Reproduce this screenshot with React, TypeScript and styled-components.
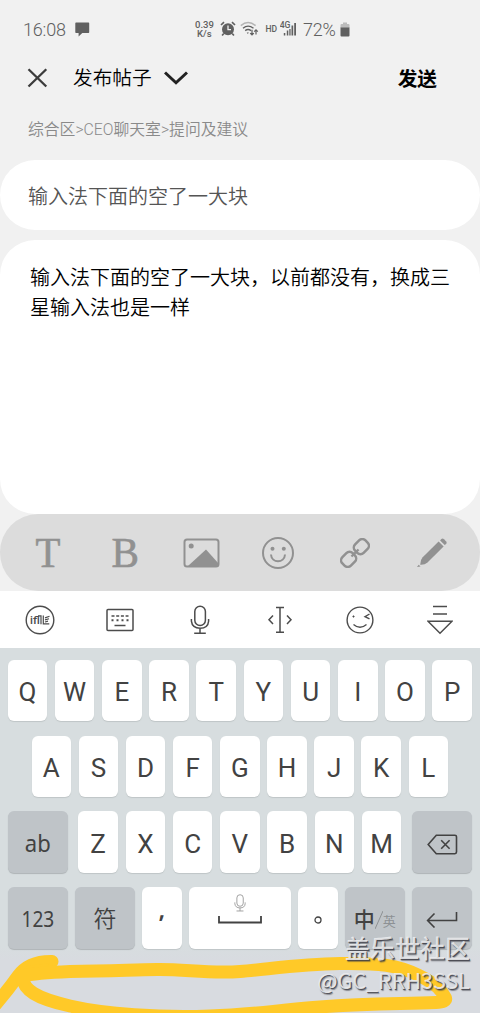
import React from 'react';
import styled, { createGlobalStyle } from 'styled-components';

const GlobalStyle = createGlobalStyle`
  * { box-sizing: border-box; }
  body { margin: 0; background: #f1f1f1; font-family: Roboto, "Noto Sans CJK SC", sans-serif; }
  svg { display: block; flex: none; }
`;

const Screen = styled.main`
  position: relative;
  width: 480px;
  height: 1013px;
  overflow: hidden;
  display: flex;
  flex-direction: column;
  background: #f1f1f1;
`;

const StatusBar = styled.header`
  height: 50px;
  padding: 8px 130px 0 23px;
  display: flex;
  align-items: center;
  color: #606060;
  font-size: 18px;
  font-weight: 350;
`;
const Clock = styled.span`width: 51.5px; letter-spacing: -0.2px;`;
const StatusRight = styled.div`
  margin-left: auto;
  display: flex;
  align-items: center;
`;
const Speed = styled.div`
  width: 20px;
  margin-right: 6px;
  font-size: 9.5px;
  line-height: 9px;
  font-weight: 500;
  text-align: center;
`;
const Hd = styled.span`font-size: 8.5px; font-weight: 500; margin: 0 3px 0 6px;`;
const Percent = styled.span`margin: 0 4px 0 6px; width: 33px; letter-spacing: -0.2px;`;

const TitleBar = styled.div`
  height: 55px;
  padding: 0 43px 0 27px;
  display: flex;
  align-items: center;
  font-size: 20px;
  line-height: 28px;
  color: #000;
`;
const PageTitle = styled.h1`
  margin: 3px 12px 0 25px;
  font-size: 19.7px;
  font-weight: 350;
`;
const SendButton = styled.button`
  margin: 0 0 0 auto;
  padding: 0;
  border: 0;
  background: none;
  font: 700 19.7px/28px "Noto Sans CJK SC", sans-serif;
  color: #000;
`;
const Breadcrumb = styled.nav`
  height: 55px;
  padding: 14px 28px 0;
  font-size: 15.8px;
  font-weight: 350;
  line-height: 22px;
  color: #8a8a8a;
`;

const Card = styled.section<{ $height: number; $gap: number }>`
  height: ${p => p.$height}px;
  margin-bottom: ${p => p.$gap}px;
  flex: none;
  border-radius: 35px;
  background: #fff;
`;
const Subject = styled.p`
  margin: 0;
  padding: 22px 28px;
  font-size: 20px;
  font-weight: 350;
  line-height: 30px;
  color: #555;
`;
const Content = styled.p`
  margin: 0;
  padding: 23px 29px 0 30px;
  font-size: 20px;
  font-weight: 350;
  line-height: 30px;
  color: #000;
`;

const FormatBar = styled.div`
  height: 77px;
  flex: none;
  padding: 0 9.5px;
  display: grid;
  grid-template-columns: repeat(6, 1fr);
  align-items: center;
  justify-items: center;
  border-radius: 38px;
  background: #dcdcdc;
  color: #919191;
`;
const SerifMark = styled.span<{ $squeeze: number }>`
  font: 400 42.5px/50px "Liberation Serif", serif;
  -webkit-text-stroke: 0.6px currentColor;
  transform: scaleX(${p => p.$squeeze});
`;

const ImeBar = styled.div`
  height: 57px;
  flex: none;
  display: grid;
  grid-template-columns: repeat(6, 1fr);
  align-items: center;
  justify-items: center;
  background: #fff;
  color: #4c4c4c;
`;

const Keyboard = styled.div`
  flex: 1;
  padding: 11.7px 8px 0 7.7px;
  display: flex;
  flex-direction: column;
  gap: 14.7px;
  background: linear-gradient(#d7dddf 0, #d7dddf 298px, #d8dbe0 312px);
`;
const KeyRow = styled.div<{ $inset?: number }>`
  height: 61.2px;
  padding: 0 ${p => p.$inset ?? 0}px;
  display: flex;
  justify-content: space-between;
`;
const LetterGroup = styled.div`
  width: 323px;
  display: flex;
  justify-content: space-between;
`;
const Key = styled.div<{ $w?: number; $dark?: boolean; $size?: number }>`
  width: ${p => p.$w ?? 39.5}px;
  height: 61.2px;
  display: flex;
  align-items: center;
  justify-content: center;
  padding-top: 4px;
  border-radius: 6px;
  background: ${p => (p.$dark ? '#bfc4c8' : '#fff')};
  box-shadow: 0 1px 1px ${p => (p.$dark ? '#aeb3b6' : '#bfc5c7')};
  color: #424242;
  font-size: ${p => p.$size ?? 26}px;
  line-height: 32px;
`;
const WordLabel = styled.span<{ $squeeze: number }>`
  margin-top: -3px;
  font-family: "Noto Sans", sans-serif;
  transform: scaleX(${p => p.$squeeze});
`;
const SymbolLabel = styled.span`font-weight: 350;`;
const CommaLabel = styled.span`
  margin-top: -21px;
  font-family: "Noto Sans", sans-serif;
  font-weight: 600;
`;
const SpaceKey = styled(Key)`
  flex-direction: column;
  justify-content: flex-start;
  padding-top: 7px;
`;
const LangLabel = styled.span`
  display: flex;
  align-items: center;
  font-size: 21px;
  font-weight: 500;
`;
const LangAlt = styled.small`
  padding-top: 5px;
  font-size: 13px;
  line-height: 16px;
  font-weight: 400;
  color: #8d9194;
`;

const Scribble = styled.svg`
  position: absolute;
  left: 0;
  bottom: 0;
`;
const Watermark = styled.div`
  position: absolute;
  right: 10px;
  bottom: 17px;
  text-align: right;
  color: rgba(235, 236, 238, 0.9);
  font-family: "Noto Sans CJK SC", sans-serif;
  text-shadow: 1px 1px 0 rgba(60, 60, 68, 0.8), 1.5px 1.5px 1px rgba(60, 60, 68, 0.5);
`;
const Community = styled.div`font-size: 25px; font-weight: 500; line-height: 34px;`;
const Author = styled.div`font-size: 21.5px; line-height: 32px;`;

const line = { fill: 'none', stroke: 'currentColor' } as const;

const ChatIcon = () => (
  <svg width="15" height="15" viewBox="0 0 15 15" fill="currentColor"><path d="M1 0.5h12.5q.7 0 .7.7v9q0 .7-.7.7H7.3L3.6 14.5v-3.6H1q-.7 0-.7-.7v-9Q.3.5 1 .5z" /></svg>
);
const AlarmIcon = () => (
  <svg width="16" height="16" viewBox="0 0 16 16">
    <circle cx="8" cy="8.2" r="6" fill="currentColor" />
    <path d="M1 4 4 1.2M15 4l-3-2.8M3.8 12.5l-1.7 2M12.2 12.5l1.7 2" {...line} strokeWidth="1.7" />
    <path d="M8 4.6v4h3" fill="none" stroke="#f1f1f1" strokeWidth="1.3" />
  </svg>
);
const WifiSvg = styled.svg`margin-left: 4px;`;
const WifiIcon = () => (
  <WifiSvg width="19" height="16" viewBox="0 0 19 16" {...line} strokeWidth="1.4">
    <path d="M.8 4.6Q8 -1.6 15.6 4.6" stroke="#b4b4b4" />
    <path d="M3 7.2Q8 3 13.5 7.2M5.2 9.6Q8 7.4 11 9.6" />
    <path d="M6.7 11.6h2.2L7.8 13z" fill="currentColor" stroke="none" />
    <path d="M12 8.8v5M10.2 12.2l1.8 1.8 1.8-1.8M16 13.6V9M14.2 10.6 16 8.8l1.8 1.8" strokeWidth="1.2" />
  </WifiSvg>
);
const SignalIcon = () => (
  <svg width="17" height="16" viewBox="0 0 17 16" fill="currentColor">
    <text x="-.3" y="7.2" fontSize="8.6" fontWeight="500">4G</text>
    <path d="M3.8 12h1.5v2.5H3.8zM6.8 9.5h1.5v5H6.8zM9.3 8h1.3v6.5H9.3zM11.5 4.5h1.7v10h-1.7zM14.2 2h1.8v12.5h-1.8z" />
  </svg>
);
const BatteryIcon = () => (
  <svg width="10" height="15" viewBox="0 0 10 15">
    <path d="M3 .5h4v1.6h1.5q1 0 1 1V6h-9V3.1q0-1 1-1H3z" fill="#bcbcbc" />
    <path d="M.5 5.5h9v8q0 1-1 1h-7q-1 0-1-1z" fill="currentColor" />
  </svg>
);
const CloseIcon = () => (
  <svg width="21" height="20" viewBox="0 0 21 20" fill="none" stroke="#3c3c3c" strokeWidth="2.3"><path d="m1.5 1.2 17.8 17.3M19.3 1.2 1.5 18.5" /></svg>
);
const ChevronIcon = () => (
  <svg width="24" height="14" viewBox="0 0 24 14" fill="none" stroke="#222" strokeWidth="3"><path d="m1 1.5 11 10.3L23 1.5" /></svg>
);
const ImageIcon = () => (
  <svg width="37" height="30" viewBox="0 0 37 30">
    <rect x="1.5" y="1.5" width="34" height="27" rx="2.5" {...line} strokeWidth="2" />
    <circle cx="8.2" cy="8" r="2.5" fill="currentColor" />
    <path d="M5 28 23 11.5 36 26v2z" fill="currentColor" />
  </svg>
);
const SmileIcon = () => (
  <svg width="34" height="34" viewBox="0 0 34 34">
    <g {...line} strokeWidth="2"><circle cx="17" cy="17" r="15" /><path d="M10 18.5c.5 9 13.5 9 14 0" /></g>
    <circle cx="11.5" cy="12.7" r="2" fill="currentColor" /><circle cx="22.8" cy="12.7" r="2" fill="currentColor" />
  </svg>
);
const LinkIcon = () => (
  <svg width="30" height="30" viewBox="0 0 30 30" {...line} strokeWidth="2.5">
    <g transform="rotate(-45 15 15)"><rect x="-1.3" y="9" width="14.6" height="12" rx="4.5" /><rect x="16.7" y="9" width="14.6" height="12" rx="4.5" /><path d="M10 15h10" strokeWidth="2.3" /></g>
  </svg>
);
const PenIcon = () => (
  <svg width="32" height="31" viewBox="0 0 32 31" fill="currentColor">
    <path d="m22.6 4.5 5 5L11.5 25.4Q8.7 28 4.2 27.7 4.1 23 6.7 20.3z" />
    <path d="m24.1 3.4 1.3-1.3q1.2-1.2 2.6.1l2.2 2.3q1.1 1.2-.1 2.4l-1.4 1.2z" />
    <path d="m2.7 27.7 1.8 1.7L1 30z" />
  </svg>
);
const FlyLogo = () => (
  <svg width="30" height="30" viewBox="0 0 30 30">
    <circle cx="15" cy="15" r="13.8" {...line} strokeWidth="1.4" />
    <text x="5" y="19.3" fontSize="11.5" fontWeight="500" fill="currentColor">ifl</text>
    <path d="M13 10.8h3v8.5M18.3 10.5v8.3h6M20 12.9l4.5-1.7M20 14.9l4-1.2M20 17l3-.8" {...line} strokeWidth="1.2" />
  </svg>
);
const KeyboardIcon = () => (
  <svg width="28" height="24" viewBox="0 0 28 24" {...line} strokeWidth="1.5">
    <rect x="1" y="1.5" width="26" height="21" rx="1" />
    <path d="M5.5 8h17" strokeDasharray="3 1.7" strokeWidth="1.3" /><path d="M5.5 12.3h18" strokeDasharray="2 3" strokeWidth="2" /><path d="M8.5 17.5h11" />
  </svg>
);
const MicIcon = ({ w = 20, h = 30 }: { w?: number; h?: number }) => (
  <svg width={w} height={h} viewBox="0 0 20 30" {...line} strokeWidth="1.5">
    <rect x="4.8" y="1.2" width="10.6" height="19.3" rx="5.3" />
    <path d="M1.4 14v2.2q.8 7 8.7 7t8.5-7V14M10 23.2v5M4.2 28.3h11.6" />
  </svg>
);
const CursorIcon = () => (
  <svg width="26" height="28" viewBox="0 0 26 28" {...line} strokeWidth="1.5"><path d="M9 1.5h8M9 26.3h8M13 1.5v25M6 9.5 2 13.8 6 18M20 9.5l4 4.3L20 18" /></svg>
);
const WinkIcon = () => (
  <svg width="28" height="28" viewBox="0 0 28 28" {...line} strokeWidth="1.4">
    <circle cx="14" cy="14" r="12.9" /><path d="M7.5 18.5q6.5 5.5 13 0M23.5 8 19 10.7l4.5 2.2" /><circle cx="7.5" cy="10.5" r=".7" fill="currentColor" strokeWidth=".7" />
  </svg>
);
const CollapseIcon = () => (
  <svg width="26" height="30" viewBox="0 0 26 30" {...line} strokeWidth="1.5"><path d="M6 1.5h14M6 9h14M1 16.3h24L13 28.3z" /></svg>
);
const BackspaceIcon = () => (
  <svg width="31" height="21" viewBox="0 0 31 21" {...line} strokeWidth="1.6"><path d="M9.3 1.2h18.6q1.6 0 1.6 1.6v15.3q0 1.6-1.6 1.6H9.3L1.2 10.5zM14.2 6.3l8.4 8.5M22.6 6.3l-8.4 8.5" /></svg>
);
const EnterIcon = () => (
  <svg width="32" height="16" viewBox="0 0 32 16" {...line} strokeWidth="1.6"><path d="M30.5 0v8.5H2M8.5 1.5 1.6 8.5l6.9 7" /></svg>
);
const SpaceBar = () => (
  <svg width="44" height="8" viewBox="0 0 44 8" {...line} strokeWidth="1.8"><path d="M1 0v6.5h42V0" /></svg>
);
const MutedMic = styled.span`height: 22px; color: #999;`;

const letters = (s: string) => s.split('').map(c => <Key key={c}>{c}</Key>);

export default function App() {
  return (
    <Screen>
      <GlobalStyle />
      <StatusBar>
        <Clock>16:08</Clock>
        <ChatIcon />
        <StatusRight>
          <Speed>0.39 K/s</Speed>
          <AlarmIcon />
          <WifiIcon />
          <Hd>HD</Hd>
          <SignalIcon />
          <Percent>72%</Percent>
          <BatteryIcon />
        </StatusRight>
      </StatusBar>
      <TitleBar>
        <CloseIcon />
        <PageTitle>发布帖子</PageTitle>
        <ChevronIcon />
        <SendButton>发送</SendButton>
      </TitleBar>
      <Breadcrumb>综合区&gt;CEO聊天室&gt;提问及建议</Breadcrumb>
      <Card $height={70} $gap={10}><Subject>输入法下面的空了一大块</Subject></Card>
      <Card $height={274} $gap={0}><Content>输入法下面的空了一大块，以前都没有，换成三星输入法也是一样</Content></Card>
      <FormatBar>
        <SerifMark $squeeze={0.96}>T</SerifMark>
        <SerifMark $squeeze={0.97}>B</SerifMark>
        <ImageIcon />
        <SmileIcon />
        <LinkIcon />
        <PenIcon />
      </FormatBar>
      <ImeBar>
        <FlyLogo />
        <KeyboardIcon />
        <MicIcon />
        <CursorIcon />
        <WinkIcon />
        <CollapseIcon />
      </ImeBar>
      <Keyboard>
        <KeyRow>{letters('QWERTYUIOP')}</KeyRow>
        <KeyRow $inset={23.9}>{letters('ASDFGHJKL')}</KeyRow>
        <KeyRow>
          <Key $w={60} $dark $size={23.5}><WordLabel $squeeze={0.94}>ab</WordLabel></Key>
          <LetterGroup>{letters('ZXCVBNM')}</LetterGroup>
          <Key $w={60} $dark><BackspaceIcon /></Key>
        </KeyRow>
        <KeyRow>
          <Key $w={60} $dark $size={22}><WordLabel $squeeze={0.87}>123</WordLabel></Key>
          <Key $w={60} $dark $size={23}><SymbolLabel>符</SymbolLabel></Key>
          <Key $size={24}><CommaLabel>,</CommaLabel></Key>
          <SpaceKey $w={102}><MutedMic><MicIcon w={12} h={18} /></MutedMic><SpaceBar /></SpaceKey>
          <Key><svg width="8" height="8" {...line} strokeWidth="1.3"><circle cx="4" cy="4" r="3" /></svg></Key>
          <Key $w={60} $dark>
            <LangLabel>中<svg width="8" height="20" viewBox="0 0 8 20" stroke="#8d9194"><path d="M0 19 8 1" /></svg><LangAlt>英</LangAlt></LangLabel>
          </Key>
          <Key $w={60} $dark><EnterIcon /></Key>
        </KeyRow>
      </Keyboard>
      <Scribble width="480" height="63" viewBox="0 950 480 63" fill="none" stroke="#ffc928" strokeWidth="13" strokeLinecap="round" strokeLinejoin="round">
        <path d="M-4 1004Q8 990 18 976Q29 961 52 961.5" />
        <path d="M20 976 27 966 50 963 38 978 28 982Z" fill="#ffc928" stroke="none" />
        <path d="M22 976Q35 973 70 971.5C110 971 130 970 157 969.5S210 974 240 971.5S300 964 340 963.5S398 965 418 975S441 990 445.500 998Q447 1002 436 1002.500C400 1004 370 1003 320 1007S250 1015 210 1016C160 1018 105 1014 70 1006S24 990 22 977" />
      </Scribble>
      <Watermark>
        <Community>盖乐世社区</Community>
        <Author>@GC_RRH3SSL</Author>
      </Watermark>
    </Screen>
  );
}
